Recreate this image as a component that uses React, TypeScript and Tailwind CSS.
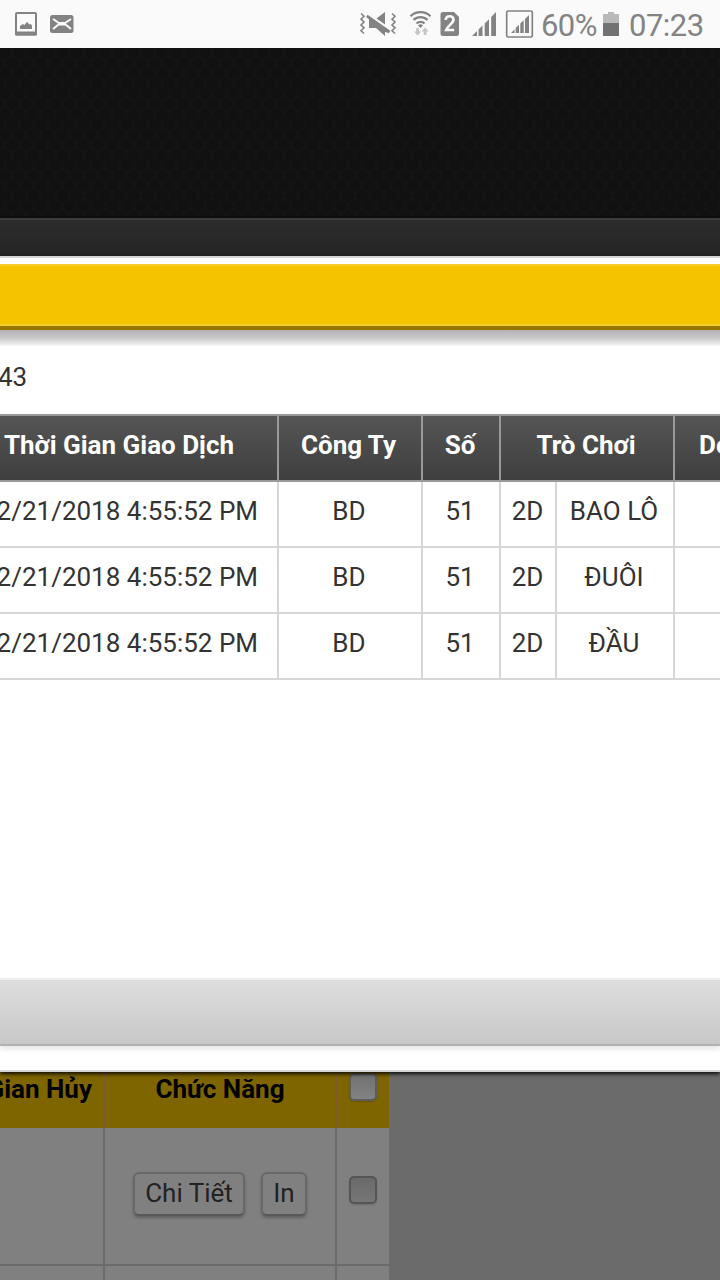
import clsx from 'clsx'
import type { ReactNode } from 'react'

const bets = [
	{ time: '2/21/2018 4:55:52 PM', company: 'BD', number: '51', digits: '2D', game: 'BAO LÔ' },
	{ time: '2/21/2018 4:55:52 PM', company: 'BD', number: '51', digits: '2D', game: 'ĐUÔI' },
	{ time: '2/21/2018 4:55:52 PM', company: 'BD', number: '51', digits: '2D', game: 'ĐẦU' },
]

function StatusBar() {
	return (
		<div className="flex h-12 shrink-0 items-center bg-[#fafafa] text-[#838383]">
			<svg className="h-12 w-[350px] shrink-0" viewBox="0 0 350 48" fill="none">
				<rect x="16" y="13" width="20" height="21.5" rx="1" stroke="currentColor" strokeWidth="2" />
				<path d="M15 31.500h22v3a1 1 0 0 1-1 1H16a1 1 0 0 1-1-1z" fill="currentColor" />
				<path d="M20 29v-3l3-2 1.500 1 2.500-3 2.500 2.500 1.500-.5 1 2v3z" fill="currentColor" />
				<rect x="50" y="15" width="23.5" height="18" rx="2.5" fill="currentColor" />
				<path d="M53 19l6 4h6l6-4M53 29l5.500-4.500h7L71 29" stroke="#fafafa" strokeWidth="2" />
			</svg>
			<svg className="h-12 w-[190px] shrink-0" viewBox="350 0 190 48" fill="none">
				<path
					d="M361 13.500l3 2.700-3 3 3 2.800-3 3 3 2.800-3 3 3 2.700M392 13.500l3 2.700-3 3 3 2.800-3 3 3 2.800-3 3 3 2.700"
					stroke="currentColor"
					strokeWidth="1.600"
				/>
				<path d="M376.500 18.500l8.500-6.500v12.500z" fill="currentColor" />
				<path d="M369 18l20 13.500v1.500l-4-1v4l-9-8h-7z" fill="currentColor" />
				<path d="M366.800 15.800L389.500 32" stroke="currentColor" strokeWidth="2.800" />
				<path
					d="M410.500 16.200a14.500 14.500 0 0 1 20 0M413.500 19.900a10 10 0 0 1 14 0M416.500 23.500a5.700 5.700 0 0 1 8 0"
					stroke="currentColor"
					strokeWidth="2.200"
				/>
				<path d="M418 25.500a3.600 3.600 0 0 1 5 0l-2.500 2.500z" fill="currentColor" />
				<path
					d="M416.200 28h2.800v3.500h2.300l-3.700 4-3.700-4h2.300zM423.700 35h2.800v-3.500h2.300l-3.700-4-3.700 4h2.300z"
					fill="#c6c6c6"
				/>
				<path d="M443 12h11l5 5v16.500a2.500 2.500 0 0 1-2.500 2.500H443a2.500 2.500 0 0 1-2.500-2.500v-19A2.500 2.500 0 0 1 443 12z" fill="currentColor" />
				<path d="M445.700 20c0-2.600 1.600-3.800 3.900-3.800 2.400 0 3.900 1.300 3.900 3.500 0 3.300-4.800 5.200-7.300 10.300h8" stroke="#fafafa" strokeWidth="2.600" />
				<path d="M472 36l5-5v5zM478.500 36v-6.500l4-4V36zM484.700 36V23.500l4.300-4.300V36zM491.200 36V17l4.800-5v24z" fill="currentColor" />
				<rect x="506.700" y="11" width="25.600" height="26" rx="1.500" stroke="currentColor" strokeWidth="1.700" />
				<path d="M511 33l3.500-3.500V33zM515.700 33v-5l3.300-3.200V33zM520.300 33v-9.500l3.400-3.300V33zM525 33v-14l4-4v18z" fill="currentColor" />
			</svg>
			<span className="w-[62px] shrink-0 pt-0.5 pl-px text-[31px] tracking-[-0.6px] whitespace-nowrap">60%</span>
			<svg className="h-12 w-5 shrink-0" viewBox="602 0 20 48">
				<path d="M603 14h5v-2h6v2h5v9h-16z" fill="#b9b9b9" />
				<path d="M603 23h16v13h-16z" fill="#727272" />
			</svg>
			<span className="pt-0.5 pl-[7px] text-[31px] tracking-[-0.5px]">07:23</span>
		</div>
	)
}

function Cell({ className, children }: { className?: string; children?: ReactNode }) {
	return (
		<div className={clsx('flex shrink-0 items-center justify-center border-r-2 pb-1.5 whitespace-nowrap', className)}>
			{children}
		</div>
	)
}

function BetTable() {
	return (
		<div className="w-full overflow-hidden">
			<div className="flex h-[68px] border-y-2 border-[#999] bg-linear-to-b from-[#555] to-[#3f3f3f] font-bold text-white">
				<Cell className="w-[279px] border-[#999] pr-[39px]">Thời Gian Giao Dịch</Cell>
				<Cell className="w-36 border-[#999] pr-[3px]">Công Ty</Cell>
				<Cell className="w-[78px] border-[#999] pr-0.5">Số</Cell>
				<Cell className="w-[174px] border-[#999] pr-0.5">Trò Chơi</Cell>
				<div className="flex items-center pb-1.5 pl-6">Do</div>
			</div>
			{bets.map((bet, i) => (
				<div key={i} className="flex h-[66px] border-b-2 border-[#d6d6d6]">
					<Cell className="w-[279px] justify-end border-[#d6d6d6] pr-[19px]">{bet.time}</Cell>
					<Cell className="w-36 border-[#d6d6d6] pr-0.5">{bet.company}</Cell>
					<Cell className="w-[78px] border-[#d6d6d6] pr-0.5">{bet.number}</Cell>
					<Cell className="w-14 border-[#d6d6d6] pr-px">{bet.digits}</Cell>
					<Cell className="w-[118px] border-[#d6d6d6] pr-0.5">{bet.game}</Cell>
				</div>
			))}
		</div>
	)
}

function Dialog() {
	return (
		<div className="relative z-10 flex h-[816px] shrink-0 flex-col border-y-2 border-[#d4d4d4] bg-white pt-1.5 shadow-[0_2px_4px_rgba(0,0,0,0.9)]">
			<div className="h-[66px] shrink-0 border-t-2 border-b-4 border-t-[#f7cd2e] border-b-[#957700] bg-[#f5c300] shadow-[inset_0_-2px_0_#f7cd2e]" />
			<div className="h-4 shrink-0 bg-linear-to-b from-[#b2b2b2] via-[#c9c9c9] to-[#f7f7f7]" />
			<div className="flex h-[68px] shrink-0 items-center pb-1.5">
				<span className="-ml-0.5">43</span>
			</div>
			<BetTable />
			<div className="mt-auto h-[68px] shrink-0 border-t-2 border-b-2 border-t-[#f0f0f0] border-b-[#b1b1b1] bg-linear-to-b from-[#dedede] to-[#c8c8c8] shadow-[0_3px_5px_rgba(0,0,0,0.1)]" />
			<div className="h-6 shrink-0" />
		</div>
	)
}

function SmallButton({ className, children }: { className?: string; children: ReactNode }) {
	return (
		<button
			className={clsx(
				'h-11 rounded-md border-2 border-[#686868] border-b-[#585858] bg-[#808080] pb-0.5 text-[#222]',
				'shadow-[0_2px_3px_rgba(0,0,0,0.25)]',
				className
			)}
		>
			{children}
		</button>
	)
}

function Checkbox({ className }: { className?: string }) {
	return <div className={clsx('size-7 rounded-[5px] border-2 shadow-[0_1px_2px_rgba(0,0,0,0.15)]', className)} />
}

function DimmedList() {
	return (
		<div className="flex flex-1 overflow-hidden bg-[#6b6b6b]">
			<div className="w-[389px] bg-[#808080]">
				<div className="flex h-14 bg-[#7f6500] font-bold text-black">
					<div className="flex w-[105px] items-center justify-end border-r-2 border-[#7f5733] pr-[11px] pb-[22px] whitespace-nowrap">
						Gian Hủy
					</div>
					<div className="flex w-[232px] items-center justify-center border-r-2 border-[#7f5733] pb-[22px]">Chức Năng</div>
					<div className="flex-1 pt-px pl-3">
						<Checkbox className="border-[#5c5c5c] bg-linear-to-b from-[#727272] to-[#828282]" />
					</div>
				</div>
				<div className="flex h-[138px] border-b-2 border-[#6b6b6b]">
					<div className="w-[105px] border-r-2 border-[#6b6b6b]" />
					<div className="flex w-[232px] items-start gap-4 border-r-2 border-[#6b6b6b] pt-11 pl-7">
						<SmallButton className="w-28">Chi Tiết</SmallButton>
						<SmallButton className="w-[46px]">In</SmallButton>
					</div>
					<div className="flex-1 pt-12 pl-3">
						<Checkbox className="border-[#555] bg-linear-to-b from-[#6a6a6a] to-[#767676]" />
					</div>
				</div>
				<div className="flex h-3.5">
					<div className="w-[105px] border-r-2 border-[#6b6b6b]" />
					<div className="w-[232px] border-r-2 border-[#6b6b6b]" />
				</div>
			</div>
		</div>
	)
}

export default function App() {
	return (
		<div className="flex h-[1280px] w-[720px] flex-col overflow-hidden bg-[#6b6b6b] font-[Roboto,sans-serif] text-[26px] leading-none text-[#333]">
			<StatusBar />
			<div className="h-[170px] shrink-0 border-b-2 border-[#0d0d0d] bg-[#151515] bg-[radial-gradient(circle,#111111_5px,transparent_7px),radial-gradient(circle,#111111_5px,transparent_7px)] bg-[length:14.3px_20.4px] bg-[position:5px_5px,12.1px_15.2px]" />
			<div className="h-[38px] shrink-0 border-t-2 border-[#3c3c3c] bg-linear-to-b from-[#2c2c2c] to-[#252525]" />
			<Dialog />
			<DimmedList />
		</div>
	)
}
